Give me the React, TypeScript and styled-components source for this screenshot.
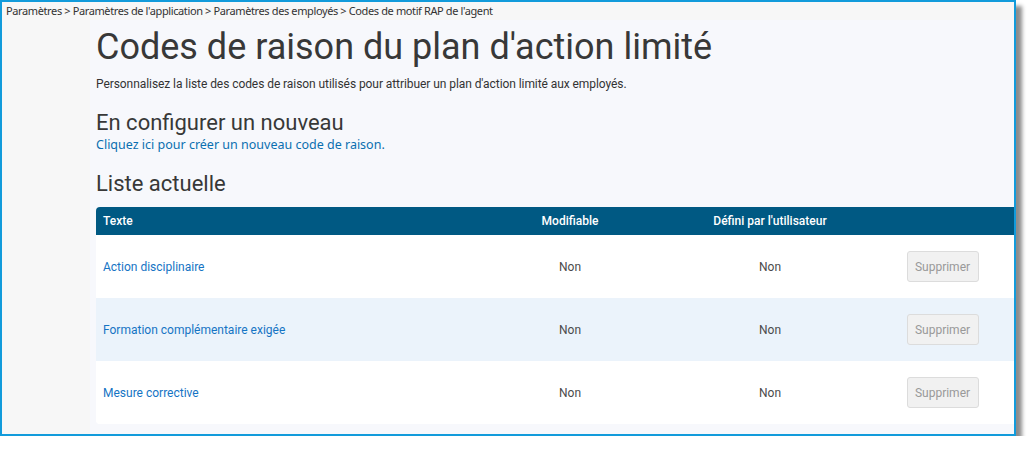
import styled, { createGlobalStyle } from 'styled-components'

const GlobalStyle = createGlobalStyle`
    html, body {
        margin: 0;
        padding: 0;
        background: #ffffff;
    }
`

const Frame = styled.div`
    box-sizing: border-box;
    width: 1016px;
    height: 436px;
    border: 2px solid #129bdb;
    box-shadow: 6px 6px 4px rgba(0, 0, 0, 0.45);
    background: #f7f7f7;
    display: flex;
    flex-direction: column;
    overflow: hidden;
`

const Breadcrumb = styled.div`
    height: 18px;
    padding-left: 4px;
    font-family: "Noto Sans", sans-serif;
    font-size: 11px;
    letter-spacing: -0.38px;
    line-height: 18px;
    color: #333;
    white-space: nowrap;
`

const Body = styled.div`
    flex: 1;
    display: flex;
`

const Sidebar = styled.div`
    width: 88px;
    flex-shrink: 0;
`

const Main = styled.main`
    flex: 1;
    background: #f7f8fc;
    padding: 4px 0 0 6px;
    font-family: Roboto, sans-serif;
    color: #333;
    overflow: hidden;
`

const Title = styled.h1`
    margin: 0;
    font-size: 36px;
    font-weight: 400;
    line-height: 46px;
    color: #383838;
`

const Intro = styled.p`
    margin: 5px 0 0;
    font-size: 12px;
    letter-spacing: -0.07px;
    line-height: 18px;
    color: #333;
`

const Section = styled.h2<{ $top: number }>`
    margin: ${({ $top }) => $top}px 0 0;
    font-size: 22px;
    font-weight: 400;
    line-height: 26px;
    color: #383838;
`

const NewLink = styled.a`
    display: block;
    font-family: "Noto Sans", sans-serif;
    font-size: 12.5px;
    line-height: 18px;
    color: #0b6fb0;
    text-decoration: none;
`

const Table = styled.div`
    margin-top: 10px;
    margin-right: -8px;
    background: #fff;
    border-radius: 4px;
    overflow: hidden;
`

const Row = styled.div<{ $head?: boolean; $alt?: boolean }>`
    display: grid;
    grid-template-columns: 374px 200px 200px 145px 1fr;
    align-items: center;
    height: ${({ $head }) => ($head ? 28 : 63)}px;
    background: ${({ $head, $alt }) => ($head ? '#005983' : $alt ? '#ebf3fb' : '#ffffff')};
    color: ${({ $head }) => ($head ? '#ffffff' : '#4a4a4a')};
    font-size: 12px;
    font-weight: ${({ $head }) => ($head ? 500 : 400)};
`

const Cell = styled.div<{ $center?: boolean }>`
    padding-left: ${({ $center }) => ($center ? 0 : 7)}px;
    text-align: ${({ $center }) => ($center ? 'center' : 'left')};
`

const NameLink = styled.a`
    color: #1574c4;
    text-decoration: none;
`

const DeleteButton = styled.button`
    width: 72px;
    height: 31px;
    border: 1px solid #dcdcdc;
    border-radius: 3px;
    background: #f1f1f1;
    color: #999;
    font-family: Roboto, sans-serif;
    font-size: 12px;
    padding: 0;
`

const rows = [
    'Action disciplinaire',
    'Formation complémentaire exigée',
    'Mesure corrective',
]

export default function App() {
    return (
        <>
            <GlobalStyle />
            <Frame>
                <Breadcrumb>
                    Paramètres &gt; Paramètres de l'application &gt; Paramètres des employés &gt; Codes de motif RAP de l'agent
                </Breadcrumb>
                <Body>
                    <Sidebar />
                    <Main>
                        <Title>Codes de raison du plan d'action limité</Title>
                        <Intro>
                            Personnalisez la liste des codes de raison utilisés pour attribuer un plan d'action limité aux employés.
                        </Intro>
                        <Section $top={17}>En configurer un nouveau</Section>
                        <NewLink href="#">Cliquez ici pour créer un nouveau code de raison.</NewLink>
                        <Section $top={17}>Liste actuelle</Section>
                        <Table>
                            <Row $head>
                                <Cell>Texte</Cell>
                                <Cell $center>Modifiable</Cell>
                                <Cell $center>Défini par l'utilisateur</Cell>
                                <Cell />
                            </Row>
                            {rows.map((name, i) => (
                                <Row key={name} $alt={i % 2 === 1}>
                                    <Cell>
                                        <NameLink href="#">{name}</NameLink>
                                    </Cell>
                                    <Cell $center>Non</Cell>
                                    <Cell $center>Non</Cell>
                                    <Cell $center>
                                        <DeleteButton disabled>Supprimer</DeleteButton>
                                    </Cell>
                                </Row>
                            ))}
                        </Table>
                    </Main>
                </Body>
            </Frame>
        </>
    )
}
